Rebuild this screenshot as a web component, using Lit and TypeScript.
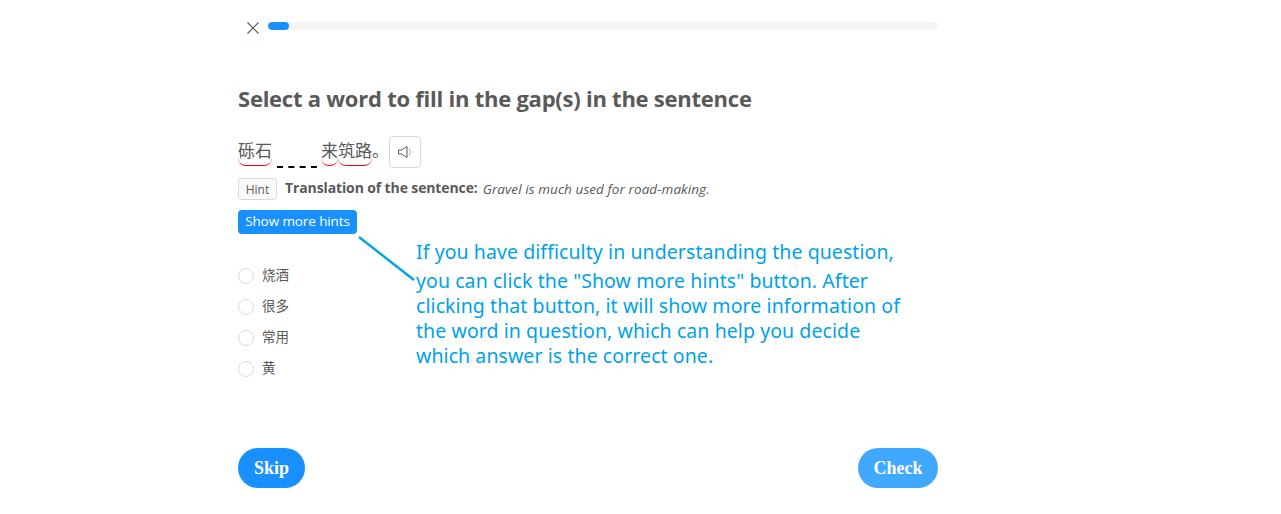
import { LitElement, html, css } from "lit";
import { customElement } from "lit/decorators.js";

@customElement("app-root")
export class AppRoot extends LitElement {
  static styles = css`
    :host { display: block; position: relative; height: 514px; background: #fff; overflow: hidden; font-family: "Open Sans", "Noto Sans CJK SC", sans-serif; color: #595959; }
    .page { width: 700px; margin-left: 238px; display: flex; flex-direction: column; height: 514px; }
    .top { display: flex; align-items: flex-start; height: 44px; }
    .close { width: 30px; height: 44px; box-sizing: border-box; display: flex; align-items: center; justify-content: center; padding-top: 11px; border-radius: 4px; box-shadow: 0 1px 1px rgba(0,0,0,0.02); }
    .track { flex: 1; height: 8px; margin-top: 22px; background: #f5f5f5; border-radius: 4px; overflow: hidden; }
    .fill { height: 8px; width: 21px; background: #1890ff; border-radius: 4px; }
    h1 { margin: 41px 0 0; font-size: 22px; line-height: 26px; font-weight: 700; color: #595959; font-family: "Open Sans", sans-serif; letter-spacing: -0.24px; }
    .sentence { display: flex; align-items: flex-start; height: 32px; margin-top: 25px; font-size: 17px; line-height: 28px; color: #595959; font-family: "Noto Sans CJK SC", sans-serif; }
    .word { display: block; height: 30px; box-sizing: border-box; border-bottom: 1px solid #f00; border-radius: 0 0 8px 8px; }
    .gap { width: 40px; margin: 0 4px 0 5px; height: 32px; box-sizing: border-box; border-bottom: 2px dashed #000; }
    .speak { width: 32px; height: 32px; box-sizing: border-box; border: 1px solid #d9d9d9; border-radius: 4px; display: flex; align-items: center; justify-content: center; }
    .hintrow { display: flex; align-items: center; height: 22px; margin-top: 10px; font-size: 13.5px; }
    .tag { width: 39px; height: 22px; box-sizing: border-box; border: 1px solid #d9d9d9; border-radius: 3px; background: #fafafa; font-size: 12px; line-height: 22px; text-align: center; margin-right: 8px; }
    .hintrow b { font-family: "Open Sans", sans-serif; font-size: 14px; line-height: 20px; margin-top: -2px; letter-spacing: -0.12px; }
    .hintrow i { margin-left: 5px; font-size: 13.5px; line-height: 20px; letter-spacing: 0.08px; }
    .more { align-self: flex-start; width: 119px; height: 24px; margin-top: 10px; background: #1890ff; color: #fff; border: 0; padding: 0 0 1px; border-radius: 4px; font: 13.5px/23px "Open Sans", sans-serif; letter-spacing: -0.1px; }
    .opts { display: flex; flex-direction: column; gap: 9px; margin-top: 30px; }
    .opt { display: flex; align-items: center; gap: 8px; height: 22px; font-size: 13.5px; font-family: "Noto Sans CJK SC", sans-serif; }
    .radio { width: 16px; height: 16px; box-sizing: border-box; border: 1px solid #d9d9d9; border-radius: 50%; margin-top: 2px; }
    .label { margin-top: -2px; }
    .foot { display: flex; justify-content: space-between; margin-top: 69px; }
    .btn { height: 40px; border-radius: 20px; border: 0; padding: 0; color: #fff; font: 700 18px/40px "Liberation Serif", serif; }
    .skip { width: 67px; background: #1890ff; }
    .check { width: 80px; background: #40a9ff; }
    .note { position: absolute; left: 416px; top: 239px; width: 500px; color: #00a2e8; font-family: "Noto Sans", sans-serif; font-size: 19.5px; line-height: 25px; letter-spacing: 0.08px; }
    .note .l { display: block; white-space: nowrap; }
    .note .l1 { margin-bottom: 4px; }
    .arrow { position: absolute; left: 355px; top: 234px; }
  `;

  render() {
    return html`
      <div class="page">
        <div class="top">
          <div class="close">
            <svg width="12" height="12" viewBox="0 0 12 12"><path d="M.5.5l11 11M11.5.5l-11 11" stroke="#595959" stroke-width="1.2" fill="none"/></svg>
          </div>
          <div class="track"><div class="fill"></div></div>
        </div>
        <h1>Select a word to fill in the gap(s) in the sentence</h1>
        <div class="sentence">
          <span class="word">砾石</span>
          <span class="gap"></span>
          <span class="word">来</span><span class="word">筑路</span><span>。</span>
          <span class="speak">
            <svg width="16" height="16" viewBox="0 0 16 16" fill="none" stroke="#595959" stroke-width="1">
              <path d="M1.5 6h3L10 2.5v11L4.5 10h-3z"/>
              <path d="M12.5 5.5v1M14 7.5v1M12.5 9.5v1"/>
            </svg>
          </span>
        </div>
        <div class="hintrow">
          <span class="tag">Hint</span>
          <b>Translation of the sentence:</b>
          <i>Gravel is much used for road-making.</i>
        </div>
        <button class="more">Show more hints</button>
        <div class="opts">
          ${["烧酒", "很多", "常用", "黄"].map(
            (t) => html`<div class="opt"><span class="radio"></span><span class="label">${t}</span></div>`
          )}
        </div>
        <div class="foot">
          <button class="btn skip">Skip</button>
          <button class="btn check">Check</button>
        </div>
      </div>
      <svg class="arrow" width="64" height="50" viewBox="0 0 64 50">
        <path d="M4 3L59 46" stroke="#00a2e8" stroke-width="2.4" fill="none"/>
      </svg>
      <div class="note">
        <span class="l l1">If you have difficulty in understanding the question,</span>
        <span class="l">you can click the "Show more hints" button. After</span>
        <span class="l">clicking that button, it will show more information of</span>
        <span class="l">the word in question, which can help you decide</span>
        <span class="l">which answer is the correct one.</span>
      </div>
    `;
  }
}
